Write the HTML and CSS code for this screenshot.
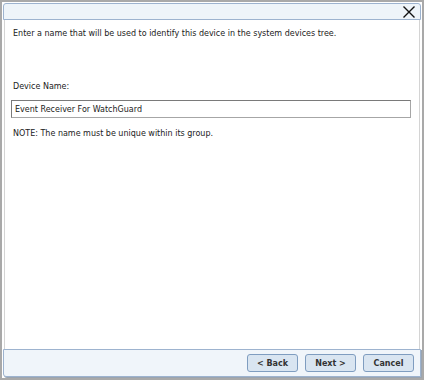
FILE: index.html
```html
<!DOCTYPE html>
<html lang="en">
<head>
    <meta charset="UTF-8">
    <title>Device Name</title>
    <link rel="stylesheet" href="styles.css">
</head>
<body>
    <div class="dialog">
        <div class="title-bar">
            <span class="close-btn" title="Close">
                <svg width="14" height="14" viewBox="0 0 14 14">
                    <path d="M1.5 1.5 L12.5 12.5 M12.5 1.5 L1.5 12.5" stroke="#111" stroke-width="1.4" fill="none"/>
                </svg>
            </span>
        </div>
        <div class="content">
            <p class="intro">Enter a name that will be used to identify this device in the system devices tree.</p>
            <label class="field-label" for="device-name">Device Name:</label>
            <input class="text-input" id="device-name" type="text" value="Event Receiver For WatchGuard">
            <p class="note">NOTE: The name must be unique within its group.</p>
        </div>
        <div class="footer">
            <button class="btn">&lt; Back</button>
            <button class="btn">Next &gt;</button>
            <button class="btn">Cancel</button>
        </div>
    </div>
</body>
</html>
```
FILE: styles.css
```css
body {
    margin: 0;
    background-color: #fff;
    font-family: 'DejaVu Sans', Verdana, sans-serif;
    font-size: 8px;
    color: #222;
}

.dialog {
    width: 424px;
    height: 380px;
    box-sizing: border-box;
    border: 2px solid #a9a9a9;
    padding: 1px;
    display: flex;
    flex-direction: column;
}

.title-bar {
    height: 15px;
    background-color: #eef4f9;
    border: 1px solid #9db3cf;
    border-radius: 3px 3px 0 0;
    display: flex;
    justify-content: flex-end;
    align-items: center;
    padding-right: 4px;
}

.close-btn {
    display: flex;
    width: 14px;
    height: 14px;
}

.content {
    flex: 1;
    border-left: 1px solid #d4d4d4;
    border-right: 1px solid #d4d4d4;
    margin: 0 1px;
    padding: 0 6px;
}

.intro {
    margin: 8px 0 0 2px;
    line-height: 12px;
}

.field-label {
    display: block;
    margin-top: 41px;
    margin-left: 2px;
    line-height: 12px;
}

.text-input {
    display: block;
    box-sizing: border-box;
    width: 400px;
    height: 18px;
    margin-top: 7px;
    padding: 0 3px;
    border: 1px solid #a6a6a6;
    border-top-color: #7a7a7a;
    border-left-color: #7a7a7a;
    font-family: inherit;
    font-size: 8px;
    color: #222;
    outline: none;
}

.note {
    margin: 10px 0 0 2px;
    line-height: 12px;
}

.footer {
    height: 26px;
    background-color: #f0f5fa;
    border: 1px solid #9db3cf;
    border-radius: 0 0 0 3px;
    box-shadow: 1px 1px 0 #9aa4b0;
    display: flex;
    justify-content: flex-end;
    align-items: center;
    gap: 7px;
    padding-right: 6px;
}

.btn {
    width: 51px;
    height: 18px;
    padding: 0;
    background-color: #d9e5f1;
    border: 1px solid #7f9dc0;
    border-radius: 3px;
    font-family: inherit;
    font-size: 8px;
    font-weight: bold;
    color: #333;
}
```
